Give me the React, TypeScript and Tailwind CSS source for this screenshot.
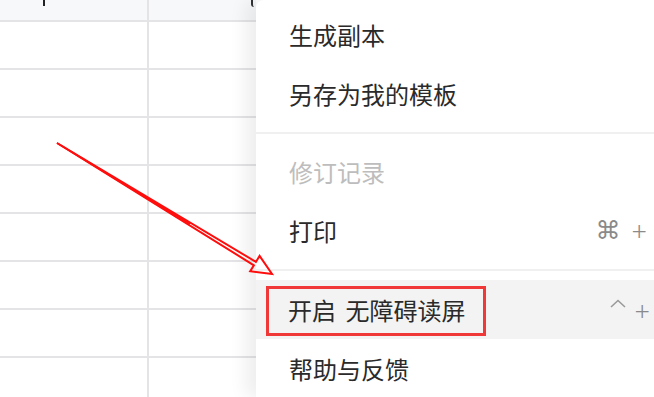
import React from "react";

const rows = [0, 1, 2, 3, 4, 5, 6, 7];

function MenuItem({
  label,
  muted,
  shortcut,
}: {
  label: string;
  muted?: boolean;
  shortcut?: React.ReactNode;
}) {
  return (
    <div className="h-[59px] shrink-0 flex items-center pl-[33px]">
      <span className={muted ? "text-[#bdbdbd]" : "text-[#2a2a2a]"}>{label}</span>
      {shortcut}
    </div>
  );
}

export default function App() {
  return (
    <div
      className="relative w-[654px] h-[397px] overflow-hidden bg-white flex"
      style={{ fontFamily: '"Noto Sans CJK SC", "Noto Sans", sans-serif' }}
    >
      {/* spreadsheet */}
      <div className="w-[256px] shrink-0 flex flex-col">
        <div className="h-[22px] shrink-0 grid grid-cols-[149px_1fr] bg-[#f7f8fa] border-b-2 border-[#e4e4e6]">
          <div className="border-r-2 border-[#e4e4e6] pl-[43px]">
            <div className="w-[2px] h-[6px] bg-[#222]" />
          </div>
          <div className="flex justify-end pr-[2px]">
            <div className="w-[3px] h-[7px] border-l-2 border-[#333] rounded-bl-[3px]" />
          </div>
        </div>
        {rows.map((r) => (
          <div
            key={r}
            className="h-[48px] shrink-0 grid grid-cols-[149px_1fr] border-b-2 border-[#e4e4e6]"
          >
            <div className="border-r-2 border-[#e4e4e6]" />
            <div />
          </div>
        ))}
      </div>

      {/* menu */}
      <div className="flex-1 bg-white flex flex-col pt-[5px] text-[24px] leading-none shadow-[-10px_0_18px_rgba(0,0,0,0.07)] rounded-tl-[8px] z-10">
        <MenuItem label="生成副本" />
        <MenuItem label="另存为我的模板" />
        <div className="h-[19px] shrink-0 flex items-center">
          <div className="h-[2px] w-full bg-[#f0f0f0]" />
        </div>
        <MenuItem label="修订记录" muted />
        <MenuItem
          label="打印"
          shortcut={
            <span className="ml-auto pr-[7px] flex items-center gap-[11px] text-[#8a8a8a]">
              <span
                className="text-[25px]"
                style={{ fontFamily: '"DejaVu Sans", sans-serif' }}
              >
                ⌘
              </span>
              <span
                className="text-[27px] font-light"
                style={{ fontFamily: '"Noto Sans", sans-serif' }}
              >
                +
              </span>
            </span>
          }
        />
        <div className="h-[20px] shrink-0 flex items-center">
          <div className="h-[2px] w-full bg-[#f0f0f0]" />
        </div>
        <div className="relative h-[59px] shrink-0 flex items-center pl-[32px] bg-[#f3f3f3]">
          <span className="text-[#2a2a2a] [word-spacing:4px]">开启 无障碍读屏</span>
          <span className="ml-auto pr-[4px] flex items-start gap-[9px] text-[#8a8a8a]">
            <svg width="16" height="9" viewBox="0 0 16 9" className="mt-[4px]">
              <polyline
                points="1,8 8,1.5 15,8"
                fill="none"
                stroke="#9a9a9a"
                strokeWidth="1.6"
              />
            </svg>
            <span
              className="text-[27px] font-light mt-[2px]"
              style={{ fontFamily: '"Noto Sans", sans-serif' }}
            >
              +
            </span>
          </span>
          <div className="absolute left-[10px] top-[6px] w-[220px] h-[50px] border-[3px] border-[#f03838]" />
        </div>
        <MenuItem label="帮助与反馈" />
      </div>

      {/* annotation arrow */}
      <svg
        className="absolute inset-0 pointer-events-none z-20"
        width="654"
        height="397"
        viewBox="0 0 654 397"
      >
        <polygon
          points="57,143 255.9,261.9 259.6,255.9 272,274 250.2,271.3 253.9,265.3"
          fill="none"
          stroke="#ff0d0d"
          strokeWidth="2"
          strokeLinejoin="miter"
        />
        <line x1="57" y1="143" x2="190" y2="224" stroke="#ff0d0d" strokeWidth="1.6" />
      </svg>
    </div>
  );
}
